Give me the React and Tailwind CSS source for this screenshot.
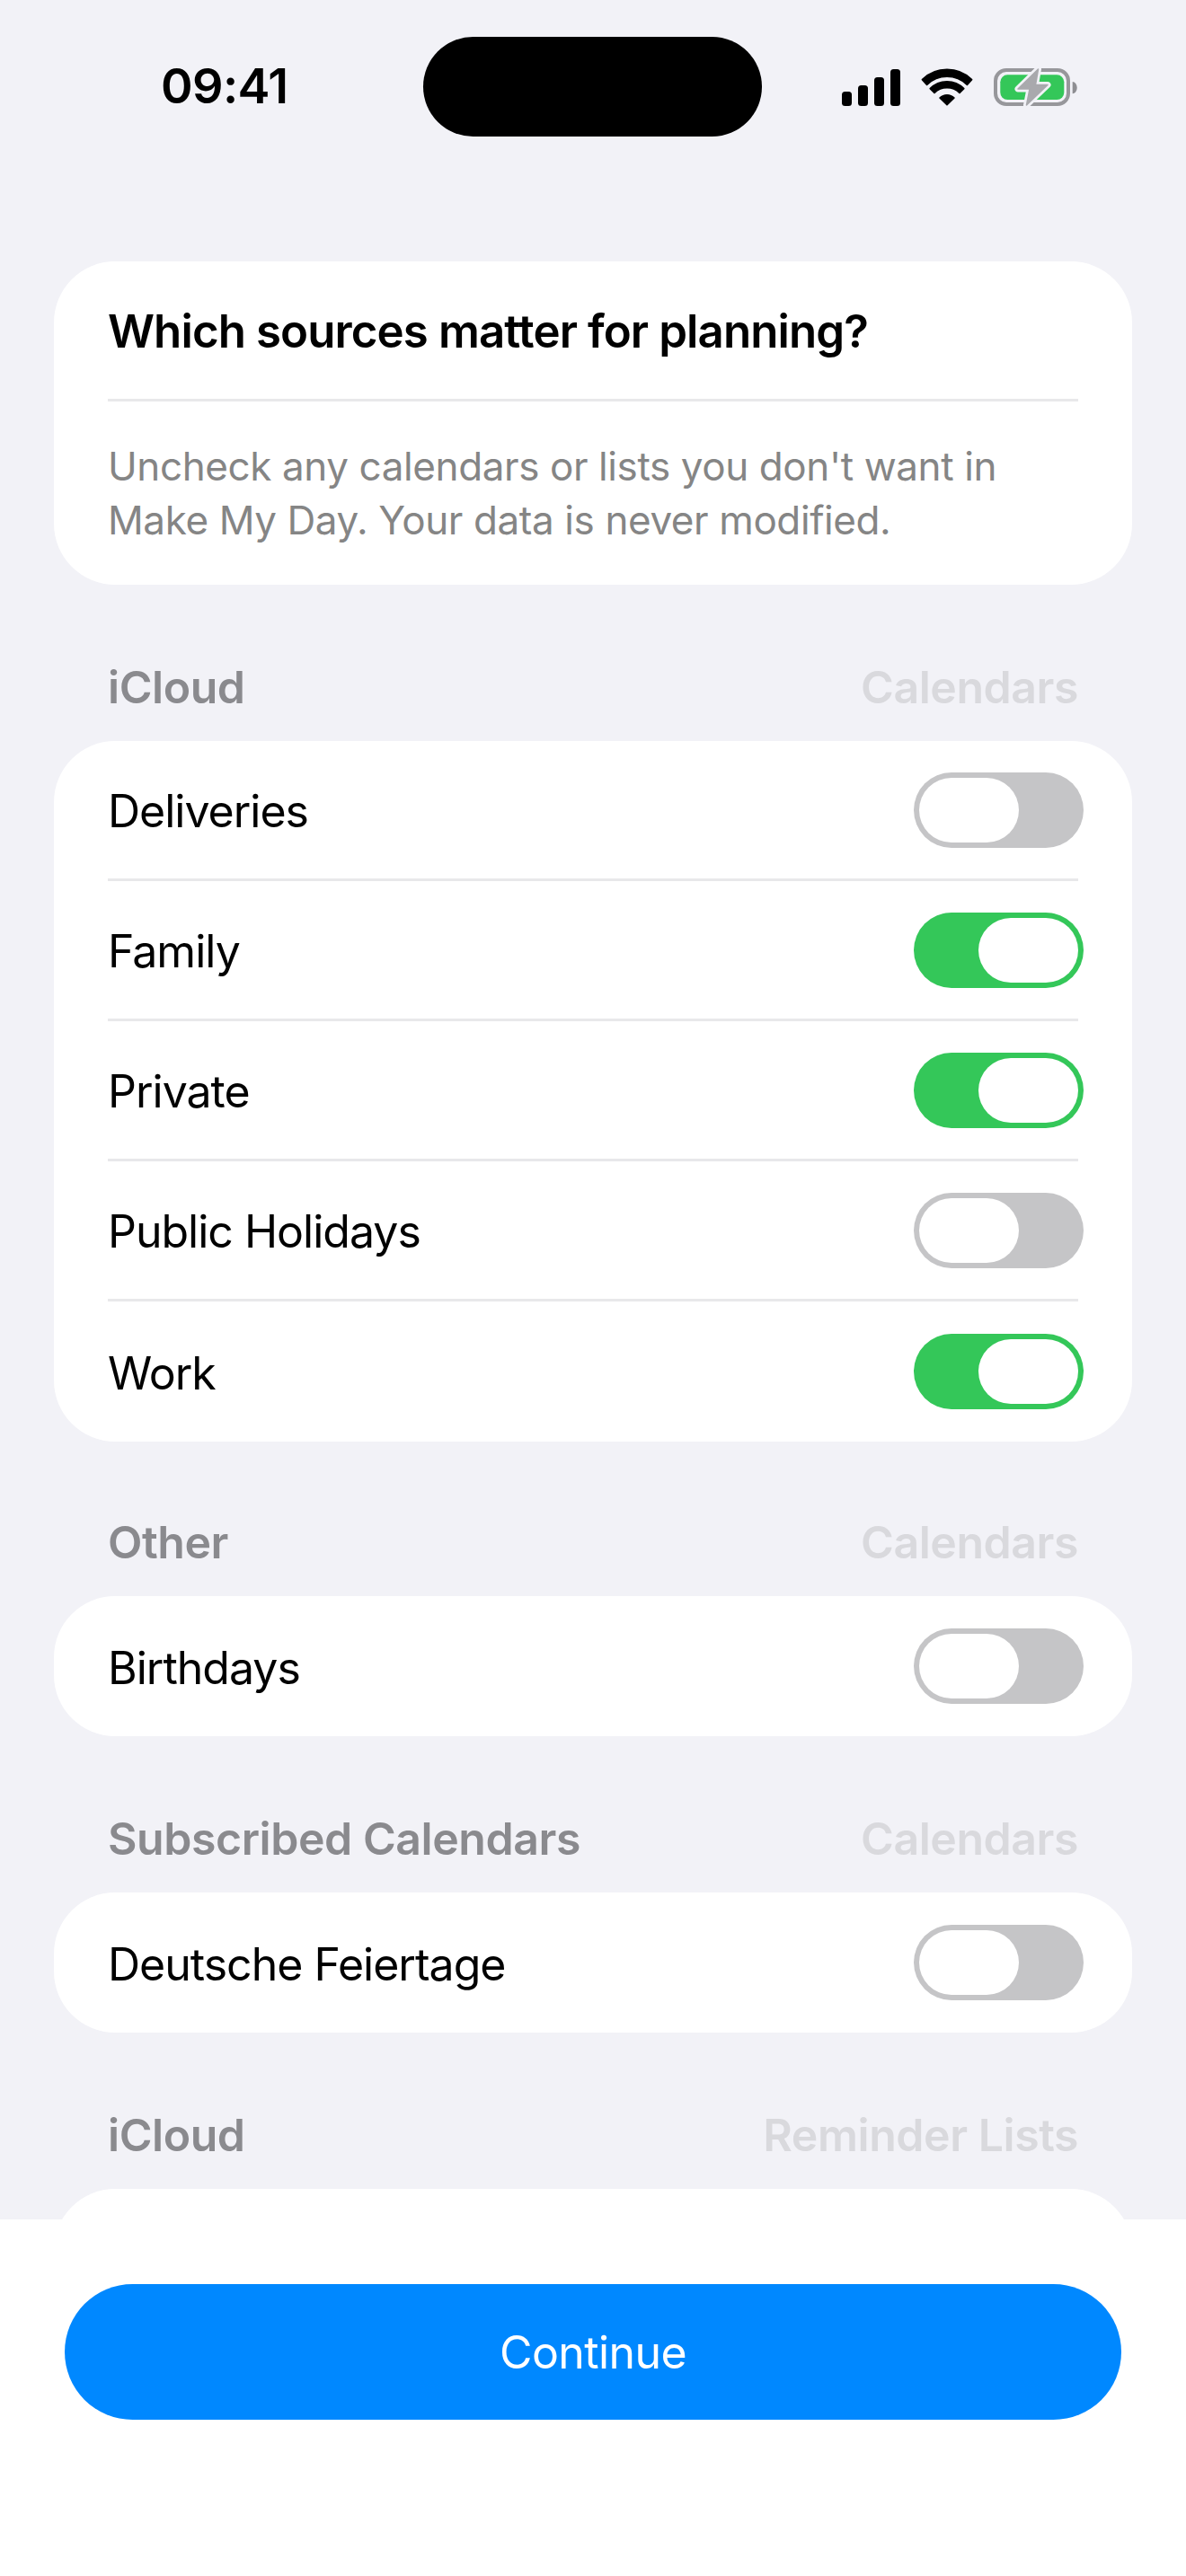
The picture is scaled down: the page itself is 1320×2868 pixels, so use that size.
import React from "react";

function Toggle({ on }) {
  return (
    <div className={`flex h-[84px] w-[189px] shrink-0 items-center rounded-full px-[6px] ${on ? "justify-end bg-[#34c759]" : "justify-start bg-[#c5c5c7]"}`}>
      <div className="h-[72px] w-[111px] rounded-full bg-white" />
    </div>
  );
}

function Row({ label, on, last }) {
  return (
    <div className="px-[60px]">
      <div className={`flex h-[156px] items-center justify-between ${last ? "" : "border-b-[3px] border-[#e8e8ea]"}`}>
        <span className="pt-[3px] text-[50px] leading-[58px] tracking-[-1px] text-black">{label}</span>
        <div className="-mr-[6px]"><Toggle on={on} /></div>
      </div>
    </div>
  );
}

function Section({ title, kind, children, className }) {
  return (
    <section className={className}>
      <div className="flex h-[60px] items-center justify-between px-[60px] text-[50px] font-semibold leading-[60px] tracking-[-0.45px]">
        <span className="text-[#8a8a8e]">{title}</span>
        <span className="text-[#d9d9dd]">{kind}</span>
      </div>
      <div className="mt-[30px] overflow-hidden rounded-[68px] bg-white">{children}</div>
    </section>
  );
}

function Wifi() {
  return (
    <svg width="58" height="42" viewBox="0 0 58 42" fill="#000" stroke="#000" strokeWidth="1.6" strokeLinejoin="round">
      <path d="M1.4 12.6A39.6 39.6 0 0 1 56.6 12.6L51.4 18.4A32 32 0 0 0 6.6 18.4Z" />
      <path d="M10.2 22.6A26.4 26.4 0 0 1 47.8 22.6L43 27.4A20 20 0 0 0 15 27.4Z" />
      <path d="M21 33A11.4 11.4 0 0 1 37 33L29 40.8Z" />
    </svg>
  );
}

function Signal() {
  return (
    <svg width="65" height="41" viewBox="0 0 65 41" fill="#000">
      <rect x="0" y="25" width="11" height="16" rx="3.5" />
      <rect x="18" y="18" width="11" height="23" rx="3.5" />
      <rect x="36" y="9" width="11" height="32" rx="3.5" />
      <rect x="54" y="0" width="11" height="41" rx="3.5" />
    </svg>
  );
}

function Battery() {
  return (
    <svg width="93" height="46" viewBox="0 -2 93 46">
      <rect x="2" y="2" width="81" height="38" rx="12" fill="none" stroke="#97979b" strokeWidth="4" />
      <rect x="7.3" y="7.3" width="71" height="27.7" rx="8" fill="#34c759" />
      <path d="M87.7 15A5 6.6 0 0 1 87.7 28.3Z" fill="#8e8e92" />
      <path d="M49.5 1L27 23H40L36.5 41L60 18.5H46.5Z" fill="#f2f2f7" stroke="#f2f2f7" strokeWidth="7" strokeLinejoin="round" />
      <path d="M49.5 1L27 23H40L36.5 41L60 18.5H46.5Z" fill="#a9a9ad" stroke="#a9a9ad" strokeWidth="1.5" strokeLinejoin="round" />
    </svg>
  );
}

export default function App() {
  return (
    <div className="flex h-[2868px] w-[1320px] flex-col overflow-hidden bg-[#f2f2f7] font-['Inter',sans-serif]">
      <div className="min-h-0 flex-1 overflow-hidden">
        <div className="flex h-[291px] items-start">
          <div className="mt-[68px] w-[471px] pl-[179px] text-[54px] font-semibold leading-[56px] tracking-[-0.6px] text-black">09:41</div>
          <div className="mt-[41px] h-[111px] w-[377px] rounded-[56px] bg-black" />
          <div className="ml-[89px] mt-[74px] flex items-center gap-[23px]">
            <Signal />
            <Wifi />
            <Battery />
          </div>
        </div>

        <div className="mx-[60px] rounded-[68px] bg-white px-[60px]">
          <div className="flex h-[156px] items-center border-b-[3px] border-[#e8e8ea] pt-[2px]">
            <h1 className="text-[51px] font-semibold leading-[60px] tracking-[-0.9px] text-black">Which sources matter for planning?</h1>
          </div>
          <p className="py-[42px] text-[44px] leading-[60px] tracking-[-0.4px] text-[#858585]">
            Uncheck any calendars or lists you don't want in<br />Make My Day. Your data is never modified.
          </p>
        </div>

        <div className="mx-[60px]">
          <Section title="iCloud" kind="Calendars" className="mt-[84px]">
            <Row label="Deliveries" />
            <Row label="Family" on />
            <Row label="Private" on />
            <Row label="Public Holidays" />
            <Row label="Work" on last />
          </Section>
          <Section title="Other" kind="Calendars" className="mt-[82px]">
            <Row label="Birthdays" last />
          </Section>
          <Section title="Subscribed Calendars" kind="Calendars" className="mt-[84px]">
            <Row label="Deutsche Feiertage" last />
          </Section>
          <Section title="iCloud" kind="Reminder Lists" className="mt-[84px]">
            <div className="h-[156px]" />
          </Section>
        </div>
      </div>

      <div className="h-[397px] shrink-0 bg-white px-[72px] pt-[72px]">
        <button className="flex h-[151px] w-full items-center justify-center rounded-full bg-[#0088ff] text-[50px] leading-[58px] tracking-[-0.6px] text-white">
          Continue
        </button>
      </div>
    </div>
  );
}
